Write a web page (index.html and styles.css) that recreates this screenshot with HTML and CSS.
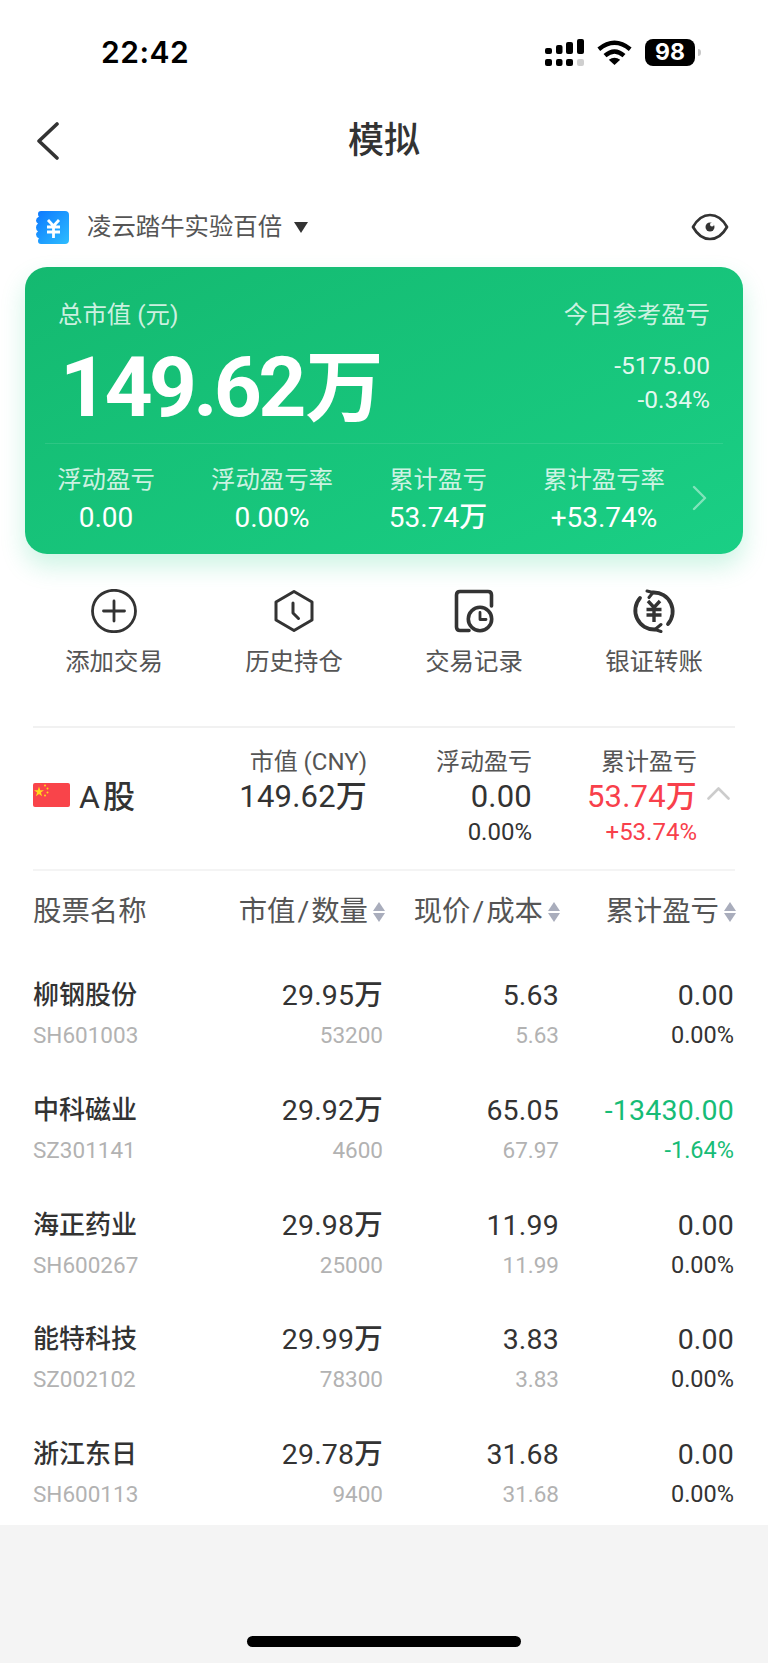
FILE: index.html
```html
<!DOCTYPE html>
<html lang="zh-CN">
<head>
<meta charset="utf-8">
<title>模拟</title>
<link rel="stylesheet" href="styles.css">
</head>
<body>
<div class="page">
  <main class="sheet">
    <header class="status">
      <span class="time">22:42</span>
      <div class="status-icons">
        <svg class="signal" width="39" height="27" viewBox="0 0 39 27">
          <g fill="#000">
            <rect x="0" y="9" width="7" height="6" rx="2"/><rect x="11" y="6" width="6.5" height="9" rx="2"/><rect x="21" y="3" width="7" height="12" rx="2"/><rect x="32" y="0" width="7" height="15" rx="2"/>
            <rect x="0" y="20" width="7" height="7" rx="2"/><rect x="11" y="20" width="6.5" height="7" rx="2"/><rect x="21" y="20" width="7" height="7" rx="2"/>
          </g>
          <rect x="32" y="20" width="7" height="7" rx="2" fill="#cfcfcf"/>
        </svg>
        <svg class="wifi" width="35" height="25" viewBox="0 0 35 25">
          <path d="M1.8 9.2Q17.5-3.6 33.2 9.2M8 15.6Q17.500 7.300 27 15.600" fill="none" stroke="#000" stroke-width="4.400"/>
          <path d="M11.800 19.800Q17.500 15.500 23.200 19.800L17.500 25Z" fill="#000"/>
        </svg>
        <div class="battery"><span class="battery-num">98</span></div>
        <span class="battery-tip"></span>
      </div>
    </header>

    <nav class="nav">
      <svg class="back" width="24" height="38" viewBox="0 0 24 38"><path d="M21 2L3 19L21 36" fill="none" stroke="#333" stroke-width="3.600" stroke-linecap="round" stroke-linejoin="round"/></svg>
      <h1 class="title">模拟</h1>
    </nav>

    <section class="account">
      <div class="account-left">
        <svg width="33" height="33" viewBox="0 0 33 33">
          <defs><linearGradient id="acc" x1="0" y1="0" x2="1" y2="1"><stop offset="0" stop-color="#0d78ff"/><stop offset="1" stop-color="#2dbdff"/></linearGradient></defs>
          <path d="M5 0H29Q33 0 33 4V29Q33 33 29 33H5Q2 33 2 30Q2 28 3 27.500Q0 26 0 23.500Q0 21.500 2 20.500Q0 19 0 16.500Q0 14 2 12.500Q0 11.500 0 9.500Q0 7 3 5.500Q2 5 2 3Q2 0 5 0Z" fill="url(#acc)"/>
          <path d="M12 9L17.500 15L23 9M11 16H24M11 21H24M17.500 15V27" fill="none" stroke="#fff" stroke-width="2.800"/>
        </svg>
        <span class="account-name">凌云踏牛实验百倍</span>
        <span class="caret"></span>
      </div>
      <svg class="eye" width="38" height="28" viewBox="0 0 38 28">
        <path d="M2 14C7 5 12 2 19 2C26 2 31 5 36 14C31 23 26 26 19 26C12 26 7 23 2 14Z" fill="none" stroke="#333" stroke-width="2.700" stroke-linejoin="round"/>
        <circle cx="19" cy="14" r="4.500" fill="#333"/>
        <circle cx="21" cy="11.500" r="2" fill="#fff"/>
      </svg>
    </section>

    <section class="card">
      <div class="card-head">
        <span>总市值 (元)</span>
        <span>今日参考盈亏</span>
      </div>
      <div class="card-main">
        <div class="big">149.62<span class="big-unit">万</span></div>
        <div class="today">
          <div>-5175.00</div>
          <div>-0.34%</div>
        </div>
      </div>
      <div class="card-foot">
        <div class="metrics">
          <div class="metric"><div class="metric-label">浮动盈亏</div><div class="metric-value">0.00</div></div>
          <div class="metric"><div class="metric-label">浮动盈亏率</div><div class="metric-value">0.00%</div></div>
          <div class="metric"><div class="metric-label">累计盈亏</div><div class="metric-value">53.74万</div></div>
          <div class="metric"><div class="metric-label">累计盈亏率</div><div class="metric-value">+53.74%</div></div>
        </div>
        <svg class="card-chevron" width="16" height="26" viewBox="0 0 16 26"><path d="M2 2L13 13L2 24" fill="none" stroke="#fff" stroke-opacity=".45" stroke-width="2.400" stroke-linecap="round" stroke-linejoin="round"/></svg>
      </div>
    </section>

    <section class="actions">
      <div class="action">
        <svg width="46" height="44" viewBox="0 0 46 44"><ellipse cx="23" cy="22" rx="21.500" ry="20.700" fill="none" stroke="#333" stroke-width="2.800"/><path d="M23 12V32M12.500 22H33.500" stroke="#333" stroke-width="2.800" stroke-linecap="round"/></svg>
        <span class="action-label">添加交易</span>
      </div>
      <div class="action">
        <svg width="40" height="44" viewBox="0 0 40 44"><path d="M20 2.500L38 13V31L20 41.500L2 31V13Z" fill="none" stroke="#333" stroke-width="3" stroke-linejoin="round"/><path d="M19 14V24L24.500 29.500" fill="none" stroke="#333" stroke-width="3" stroke-linecap="round" stroke-linejoin="round"/></svg>
        <span class="action-label">历史持仓</span>
      </div>
      <div class="action">
        <svg width="40" height="44" viewBox="0 0 40 44"><path d="M15 41.500H6Q2.500 41.500 2.500 38V6Q2.500 2.500 6 2.500H34Q37.500 2.500 37.500 6V17" fill="none" stroke="#333" stroke-width="3.600" stroke-linecap="round"/><circle cx="26" cy="30" r="11.700" fill="none" stroke="#333" stroke-width="3.600"/><path d="M26 23.500V30.500H32" fill="none" stroke="#333" stroke-width="2.800" stroke-linecap="round" stroke-linejoin="round"/></svg>
        <span class="action-label">交易记录</span>
      </div>
      <div class="action">
        <svg width="44" height="44" viewBox="0 0 44 44"><path d="M21 3.500A19 19 0 0 1 36 35" fill="none" stroke="#333" stroke-width="3.800" stroke-linecap="round"/><path d="M23 40.500A19 19 0 0 1 8 9" fill="none" stroke="#333" stroke-width="3.800" stroke-linecap="round"/><path d="M15 2L21 3.500L17 8.500M29 35.500L23 40.500L29 42.500" fill="none" stroke="#333" stroke-width="3" stroke-linecap="round" stroke-linejoin="round"/><path d="M16 12L22 18.500L28 12M14.500 20.500H29.500M14.500 26H29.500M22 18.500V33" fill="none" stroke="#333" stroke-width="3.400"/></svg>
        <span class="action-label">银证转账</span>
      </div>
    </section>

    <section class="summary">
      <div class="market">
        <svg class="flag" width="37" height="24" viewBox="0 0 37 24">
          <rect width="37" height="24" rx="2" fill="#f9444a"/>
          <path d="M6 3.500L7.200 7.300H11L7.900 9.600L9.100 13.300L6 11L2.900 13.300L4.100 9.600L1 7.300H4.800Z" fill="#ffd91a"/>
          <g fill="#ffd91a"><circle cx="12" cy="2.500" r="1"/><circle cx="14.500" cy="5.500" r="1"/><circle cx="14.500" cy="9.500" r="1"/><circle cx="12" cy="12.500" r="1"/></g>
        </svg>
        <span class="market-name">A股</span>
      </div>
      <div class="sum-col">
        <div class="sum-label">市值 (CNY)</div>
        <div class="sum-value">149.62万</div>
      </div>
      <div class="sum-col">
        <div class="sum-label">浮动盈亏</div>
        <div class="sum-value">0.00</div>
        <div class="sum-sub">0.00%</div>
      </div>
      <div class="sum-col">
        <div class="sum-label">累计盈亏</div>
        <div class="sum-value red">53.74万</div>
        <div class="sum-sub red">+53.74%</div>
      </div>
      <div class="collapse">
        <svg width="23" height="13" viewBox="0 0 23 13"><path d="M1.500 11.500L11.500 1.500L21.500 11.500" fill="none" stroke="#ccc" stroke-width="2.600" stroke-linecap="round" stroke-linejoin="round"/></svg>
      </div>
    </section>

    <section class="table-head">
      <div class="th-name">股票名称</div>
      <div class="th">市值<span class="slash">/</span>数量<span class="sort"><i class="up"></i><i class="down"></i></span></div>
      <div class="th">现价<span class="slash">/</span>成本<span class="sort"><i class="up"></i><i class="down"></i></span></div>
      <div class="th">累计盈亏<span class="sort"><i class="up"></i><i class="down"></i></span></div>
    </section>

    <section class="rows">
      <div class="row">
        <div class="name">柳钢股份</div><div class="val">29.95万</div><div class="val">5.63</div><div class="val">0.00</div>
        <div class="code">SH601003</div><div class="sub">53200</div><div class="sub">5.63</div><div class="pct">0.00%</div>
      </div>
      <div class="row">
        <div class="name">中科磁业</div><div class="val">29.92万</div><div class="val">65.05</div><div class="val green">-13430.00</div>
        <div class="code">SZ301141</div><div class="sub">4600</div><div class="sub">67.97</div><div class="pct green">-1.64%</div>
      </div>
      <div class="row">
        <div class="name">海正药业</div><div class="val">29.98万</div><div class="val">11.99</div><div class="val">0.00</div>
        <div class="code">SH600267</div><div class="sub">25000</div><div class="sub">11.99</div><div class="pct">0.00%</div>
      </div>
      <div class="row">
        <div class="name">能特科技</div><div class="val">29.99万</div><div class="val">3.83</div><div class="val">0.00</div>
        <div class="code">SZ002102</div><div class="sub">78300</div><div class="sub">3.83</div><div class="pct">0.00%</div>
      </div>
      <div class="row">
        <div class="name">浙江东日</div><div class="val">29.78万</div><div class="val">31.68</div><div class="val">0.00</div>
        <div class="code">SH600113</div><div class="sub">9400</div><div class="sub">31.68</div><div class="pct">0.00%</div>
      </div>
    </section>
  </main>
  <footer class="home"><span class="home-bar"></span></footer>
</div>
</body>
</html>
```
FILE: styles.css
```css
* { box-sizing: border-box; margin: 0; padding: 0; }
html, body { width: 768px; height: 1663px; overflow: hidden; }
body { background: #f4f4f4; font-family: Roboto, "Noto Sans CJK SC", sans-serif; color: #333; }
.page { height: 1663px; display: flex; flex-direction: column; }
.sheet { background: #fff; height: 1525px; }

.status { height: 104px; display: flex; align-items: center; justify-content: space-between; padding: 0 67px 0 101px; }
.time { font-family: Inter, sans-serif; font-weight: 600; font-size: 30px; line-height: 36px; color: #000; letter-spacing: .5px; }
.status-icons { display: flex; align-items: center; }
.wifi { margin-left: 13px; }
.battery { width: 50px; height: 27px; margin-left: 13px; background: #000; border-radius: 8px; display: flex; align-items: center; justify-content: center; }
.battery-num { font-family: Inter, sans-serif; font-weight: 700; font-size: 23px; line-height: 27px; color: #fff; }
.battery-tip { width: 3px; height: 7px; margin-left: 3px; background: #c8c8c8; border-radius: 0 3px 3px 0; }

.nav { height: 74px; display: flex; align-items: center; justify-content: center; padding: 0 36px; position: relative; }
.back { position: absolute; left: 36px; top: 18px; }
.title { font-size: 36px; line-height: 50px; font-weight: 500; color: #333; }

.account { height: 66px; margin: 16px 0 7px; padding: 0 39px 0 36px; display: flex; align-items: center; justify-content: space-between; }
.account-left { display: flex; align-items: center; }
.account-name { margin-left: 18px; font-size: 24.400px; line-height: 34px; color: #555; }
.caret { margin-left: 12px; width: 0; height: 0; border-left: 7px solid transparent; border-right: 7px solid transparent; border-top: 11px solid #333; }

.card { height: 287px; margin: 0 25px 0 25px; border-radius: 22px; background: linear-gradient(155deg, #14b970 0%, #1acf85 100%); box-shadow: 0 12px 24px rgba(25, 204, 131, .22); color: #fff; }
.card-head { padding: 31px 33px 0 33px; display: flex; justify-content: space-between; font-size: 24.400px; line-height: 34px; color: rgba(255, 255, 255, .8); }
.card-main { height: 112px; margin: 0 20px; padding: 0 13px 0 15px; display: flex; justify-content: space-between; border-bottom: 1px solid rgba(255, 255, 255, .1); }
.big { font-size: 84px; line-height: 112px; font-weight: 700; letter-spacing: -3.800px; }
.big-unit { font-size: 78px; letter-spacing: 0; margin-left: 3px; }
.today { padding-top: 17px; text-align: right; font-size: 24.500px; line-height: 34px; color: rgba(255, 255, 255, .9); }
.card-foot { padding-top: 18px; display: flex; height: 108px; align-items: flex-start; }
.metrics { margin-left: -2px; display: grid; grid-template-columns: repeat(4, 166px); }
.metric { text-align: center; }
.metric-label { font-size: 24.400px; line-height: 36px; color: rgba(255, 255, 255, .8); }
.metric-value { font-size: 28px; line-height: 40px; font-weight: 450; }
.card-chevron { margin: 23px 0 0 5px; }

.actions { padding: 35px 24px 0; display: grid; grid-template-columns: repeat(4, 180px); }
.action { display: flex; flex-direction: column; align-items: center; }
.action-label { margin-top: 12px; font-size: 24.400px; line-height: 34px; color: #555; }

.summary { margin: 47px 33px 0; padding: 16.500px 0 0; height: 145px; border-top: 2px solid #f1f1f1; border-bottom: 2px solid #f4f4f4; display: grid; grid-template-columns: 150px 184px 165px 165px 33px; }
.market { padding-top: 34px; height: 70px; display: flex; align-items: center; }
.flag { margin-bottom: 3px; }
.market-name { margin-left: 9px; font-size: 32px; line-height: 36px; font-weight: 450; color: #333; letter-spacing: 3px; }
.sum-col { text-align: right; }
.sum-label { font-size: 24px; line-height: 34px; color: #555; }
.sum-value { font-size: 31px; line-height: 36px; font-weight: 450; color: #333; letter-spacing: .2px; }
.sum-sub { font-size: 24px; line-height: 34px; color: #333; }
.red { color: #f8404b; }
.collapse { padding: 40px 0 0 10px; }

.table-head { margin-left: 33px; width: 703px; height: 82px; display: grid; grid-template-columns: 150px 202px 175px 176px; align-items: center; font-size: 28.400px; line-height: 40px; color: #555; }
.th { display: flex; align-items: center; justify-content: flex-end; }
.slash { margin: 0 2px; }
.sort { margin-left: 5px; display: flex; flex-direction: column; gap: 2px; }
.up, .down { display: block; width: 0; height: 0; border-left: 6px solid transparent; border-right: 6px solid transparent; }
.up { border-bottom: 9px solid #a9adbc; }
.down { border-top: 9px solid #a9adbc; }

.rows { padding: 22px 34px 0 33px; display: flex; flex-direction: column; gap: 34.750px; }
.row { display: grid; grid-template-columns: 150px 200px 176px 175px; grid-auto-rows: 40px; align-items: center; text-align: right; }
.name { text-align: left; font-size: 26px; line-height: 40px; font-weight: 500; color: #333; }
.val { padding-top: 2px; font-size: 28.500px; line-height: 40px; font-weight: 450; color: #333; letter-spacing: .2px; }
.code { text-align: left; font-size: 22.500px; line-height: 40px; color: #b2b2b2; }
.sub { font-size: 22.500px; line-height: 40px; color: #b2b2b2; }
.pct { font-size: 23.500px; line-height: 40px; color: #333; }
.green { color: #17bc76; }

.home { flex: 1; display: flex; justify-content: center; padding-top: 111px; }
.home-bar { width: 274px; height: 11px; background: #000; border-radius: 6px; }
```
